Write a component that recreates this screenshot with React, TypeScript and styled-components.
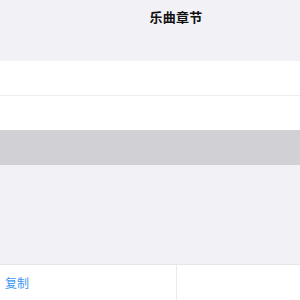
import React from "react";
import styled, { createGlobalStyle } from "styled-components";

const Global = createGlobalStyle`
  html, body { margin: 0; padding: 0; overflow: hidden; background: #f2f1f6; }
  body { font-family: "Noto Sans CJK SC", "Noto Sans", sans-serif; }
`;

const Viewport = styled.div`
  width: 100vw;
  height: 100vh;
  overflow: hidden;
`;

const Page = styled.div`
  width: 352px;
  height: 300px;
  display: flex;
  flex-direction: column;
  background: #f2f1f6;
`;

const Header = styled.header`
  height: 61px;
  flex: none;
  display: flex;
  justify-content: center;
  align-items: flex-start;
  padding-top: 8px;
  box-sizing: border-box;
`;

const Title = styled.h1`
  margin: 0;
  font-size: 13px;
  line-height: 18px;
  font-weight: 700;
  color: #111;
  letter-spacing: 0.3px;
`;

const Row = styled.div<{ $selected?: boolean; $divider?: boolean }>`
  height: ${(p) => (p.$selected || p.$divider ? 35 : 34)}px;
  flex: none;
  box-sizing: border-box;
  background: ${(p) => (p.$selected ? "#d1d0d5" : "#ffffff")};
  border-bottom: ${(p) => (p.$divider ? "1px solid #eeeef0" : "none")};
`;

const Spacer = styled.div`
  flex: 1;
`;

const Toolbar = styled.footer`
  height: 36px;
  flex: none;
  display: grid;
  grid-template-columns: 1fr 1fr;
  background: #fff;
  border-top: 1px solid #e6e5ea;
  box-sizing: border-box;
`;

const ToolButton = styled.button`
  border: none;
  background: #fff;
  padding: 0 0 0 5px;
  margin: 0;
  text-align: left;
  font-family: inherit;
  font-size: 12px;
  line-height: 35px;
  color: #3b97f2;
  & + & {
    border-left: 1px solid #ebebee;
  }
`;

export default function App() {
  return (
    <>
      <Global />
      <Viewport>
        <Page>
          <Header>
            <Title>乐曲章节</Title>
          </Header>
          <Row $divider />
          <Row />
          <Row $selected />
          <Spacer />
          <Toolbar>
            <ToolButton>复制</ToolButton>
            <ToolButton />
          </Toolbar>
        </Page>
      </Viewport>
    </>
  );
}
